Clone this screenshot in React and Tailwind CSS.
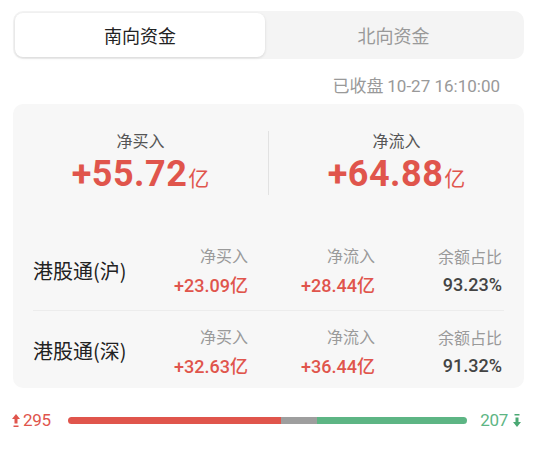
const cjk = { fontFamily: '"Noto Sans CJK SC", "Noto Sans", sans-serif' };
const num = { fontFamily: 'Roboto, "Noto Sans CJK SC", sans-serif' };

const rows = [
  { name: "港股通(沪)", buy: "+23.09", flow: "+28.44", ratio: "93.23%" },
  { name: "港股通(深)", buy: "+32.63", flow: "+36.44", ratio: "91.32%" },
];

function Big({ label, value }) {
  return (
    <div className="flex-1 flex flex-col items-center">
      <div className="text-[16px] leading-[20px] text-[#555]" style={cjk}>{label}</div>
      <div className="mt-[3px] flex items-baseline text-[#e0554c]">
        <span className="text-[36px] leading-[42px] font-bold tracking-[0.5px]" style={num}>{value}</span>
        <span className="text-[21px] leading-[24px] ml-[1px]" style={cjk}>亿</span>
      </div>
    </div>
  );
}

function Cell({ label, value, red }) {
  return (
    <div className="w-[127px] shrink-0 flex flex-col items-end">
      <div className="text-[16px] leading-[22px] text-[#9a9a9a]" style={cjk}>{label}</div>
      <div className={`mt-[7px] text-[18px] leading-[22px] font-medium ${red ? "text-[#e0554c]" : "text-[#444]"}`} style={num}>
        {value}
      </div>
    </div>
  );
}

export default function App() {
  return (
    <div className="w-[537px] h-[463px] bg-white pt-[11px]" style={cjk}>
      {/* tabs */}
      <div className="mx-[13px] h-[48px] rounded-[10px] bg-[#f4f4f4] p-[2px] flex">
        <div className="w-[250px] rounded-[8px] bg-white shadow-[0_1px_3px_rgba(0,0,0,0.12)] flex items-center justify-center text-[18px] text-[#222]">
          南向资金
        </div>
        <div className="flex-1 flex items-center justify-center text-[18px] text-[#999]">北向资金</div>
      </div>

      <div className="mt-[15px] pr-[37px] text-right text-[17px] leading-[22px] text-[#999]">
        已收盘 <span style={num}>10-27 16:10:00</span>
      </div>

      {/* card */}
      <div className="mt-[7px] mx-[13px] h-[284px] rounded-[10px] bg-[#f7f7f7]">
        <div className="pt-[26px] flex items-center">
          <Big label="净买入" value="+55.72" />
          <div className="w-px h-[64px] bg-[#e2e2e2]" />
          <Big label="净流入" value="+64.88" />
        </div>

        <div className="mt-[36px] px-[20px]">
          {rows.map((r, i) => (
            <div key={r.name} className={`flex items-center h-[80px] ${i === 0 ? "border-b border-[#ececec]" : ""}`}>
              <div className="flex-1 min-w-0 whitespace-nowrap text-[20px] text-[#222]">{r.name}</div>
              <Cell label="净买入" value={<>{r.buy}<span style={cjk}>亿</span></>} red />
              <Cell label="净流入" value={<>{r.flow}<span style={cjk}>亿</span></>} red />
              <div className="mr-[2px]">
                <Cell label="余额占比" value={r.ratio} />
              </div>
            </div>
          ))}
        </div>
      </div>

      {/* up/down bar */}
      <div className="mt-[20px] flex items-center pl-[12px] pr-[16px]">
        <div className="flex items-center text-[#e0554c] text-[17px] tracking-[-0.3px]" style={num}>
          <svg width="8" height="13" viewBox="0 0 8 13" className="mr-[3px]">
            <path d="M4 0 L8 5 H5.5 V9.5 H2.5 V5 H0 Z" fill="#e0554c" />
            <rect x="1.5" y="11.5" width="5" height="1.5" fill="#e0554c" />
          </svg>
          295
        </div>
        <div className="ml-[17px] flex-1 h-[7px] rounded-full overflow-hidden flex">
          <div className="w-[213px] bg-[#e0554c]" />
          <div className="w-[36px] bg-[#9e9e9e]" />
          <div className="flex-1 bg-[#5db584]" />
        </div>
        <div className="ml-[13px] flex items-center text-[#5db584] text-[17px] tracking-[-0.3px]" style={num}>
          207
          <svg width="8" height="13" viewBox="0 0 8 13" className="ml-[5px]">
            <rect x="1.5" y="0" width="5" height="1.5" fill="#4aa873" />
            <path d="M2.5 3.5 H5.5 V8 H8 L4 13 L0 8 H2.5 Z" fill="#4aa873" />
          </svg>
        </div>
      </div>
    </div>
  );
}
